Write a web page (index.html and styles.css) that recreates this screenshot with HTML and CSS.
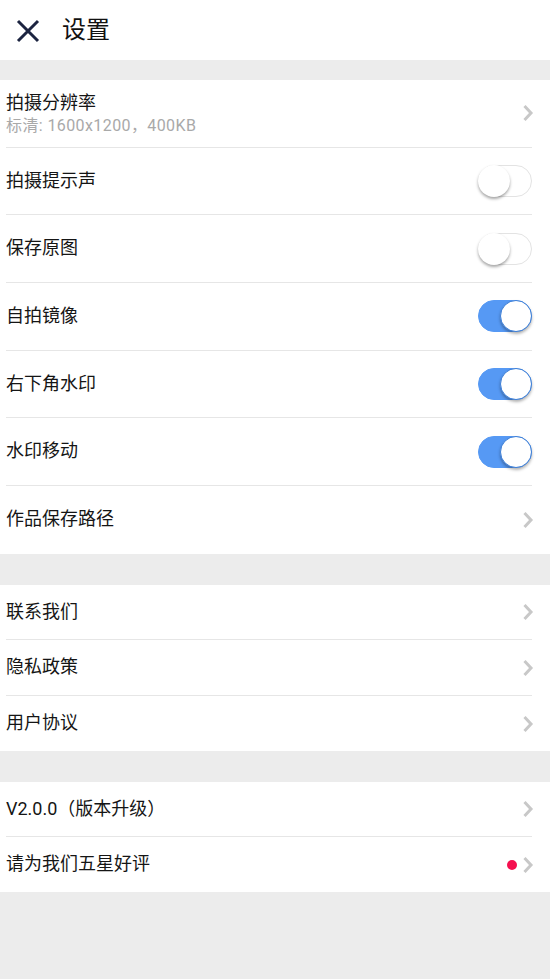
FILE: index.html
```html
<!DOCTYPE html>
<html lang="zh-CN">
<head>
<meta charset="utf-8">
<title>设置</title>
<link rel="stylesheet" href="styles.css">
</head>
<body>
<div class="page">
  <header class="header">
    <svg class="close" width="24" height="24" viewBox="0 0 24 24"><path d="M2 2 L22 22 M22 2 L2 22" stroke="#1c2440" stroke-width="3" stroke-linecap="butt" fill="none"/></svg>
    <h1 class="title">设置</h1>
  </header>

  <section class="group group-main">
    <div class="row tall">
      <div class="row-inner">
        <div class="label-wrap">
          <div class="label">拍摄分辨率</div>
          <div class="sub">标清: 1600x1200，400KB</div>
        </div>
        <svg class="chev" width="12" height="18" viewBox="0 0 12 18"><path d="M2.5 2 L9 9 L2.5 16" stroke="#c8c8c8" stroke-width="3" fill="none"/></svg>
      </div>
    </div>
    <div class="row tall"><div class="row-inner"><div class="label">拍摄提示声</div><span class="switch"><span class="knob"></span></span></div></div>
    <div class="row tall"><div class="row-inner"><div class="label">保存原图</div><span class="switch"><span class="knob"></span></span></div></div>
    <div class="row tall"><div class="row-inner"><div class="label">自拍镜像</div><span class="switch on"><span class="knob"></span></span></div></div>
    <div class="row tall"><div class="row-inner"><div class="label">右下角水印</div><span class="switch on"><span class="knob"></span></span></div></div>
    <div class="row tall"><div class="row-inner"><div class="label">水印移动</div><span class="switch on"><span class="knob"></span></span></div></div>
    <div class="row tall"><div class="row-inner last"><div class="label">作品保存路径</div><svg class="chev" width="12" height="18" viewBox="0 0 12 18"><path d="M2.5 2 L9 9 L2.5 16" stroke="#c8c8c8" stroke-width="3" fill="none"/></svg></div></div>
  </section>

  <section class="group">
    <div class="row mid"><div class="row-inner"><div class="label">联系我们</div><svg class="chev" width="12" height="18" viewBox="0 0 12 18"><path d="M2.5 2 L9 9 L2.5 16" stroke="#c8c8c8" stroke-width="3" fill="none"/></svg></div></div>
    <div class="row mid"><div class="row-inner"><div class="label">隐私政策</div><svg class="chev" width="12" height="18" viewBox="0 0 12 18"><path d="M2.5 2 L9 9 L2.5 16" stroke="#c8c8c8" stroke-width="3" fill="none"/></svg></div></div>
    <div class="row mid"><div class="row-inner last"><div class="label">用户协议</div><svg class="chev" width="12" height="18" viewBox="0 0 12 18"><path d="M2.5 2 L9 9 L2.5 16" stroke="#c8c8c8" stroke-width="3" fill="none"/></svg></div></div>
  </section>

  <section class="group">
    <div class="row short"><div class="row-inner"><div class="label">V2.0.0（版本升级）</div><svg class="chev" width="12" height="18" viewBox="0 0 12 18"><path d="M2.5 2 L9 9 L2.5 16" stroke="#c8c8c8" stroke-width="3" fill="none"/></svg></div></div>
    <div class="row short"><div class="row-inner last"><div class="label">请为我们五星好评</div><span class="right"><span class="dot"></span><svg class="chev" width="12" height="18" viewBox="0 0 12 18"><path d="M2.5 2 L9 9 L2.5 16" stroke="#c8c8c8" stroke-width="3" fill="none"/></svg></span></div></div>
  </section>
</div>
</body>
</html>
```

FILE: styles.css
```css
* { box-sizing: border-box; }
html, body {
  margin: 0;
  padding: 0;
  background: #ececec;
}
body {
  font-family: Roboto, "Noto Sans CJK SC", "Noto Sans", sans-serif;
  color: #1a1a1a;
  width: 550px;
  height: 979px;
  overflow: hidden;
}
.page {
  display: flex;
  flex-direction: column;
}
.header {
  height: 60px;
  background: #fff;
  display: flex;
  align-items: center;
  padding-left: 16px;
}
.close {
  display: block;
  margin-top: 2px;
}
.title {
  margin: 0 0 0 22px;
  font-size: 24px;
  font-weight: 400;
  line-height: 1;
  color: #111;
}
.group {
  background: #fff;
  margin-top: 31px;
}
.group-main {
  margin-top: 20px;
}
.row {
  padding-left: 6px;
  padding-right: 18px;
}
.row.tall { height: 67.7px; }
.row.mid { height: 55.5px; }
.row.short { height: 55px; }
.row-inner {
  height: 100%;
  display: flex;
  align-items: center;
  justify-content: space-between;
  border-bottom: 1px solid #e6e6e6;
}
.row-inner.last { border-bottom: none; }
.label {
  font-size: 18px;
  line-height: 24px;
  color: #151515;
  margin-top: -1px;
}
.label-wrap {
  display: flex;
  flex-direction: column;
}
.label-wrap .label { margin-top: 0; }
.sub {
  font-size: 16px;
  letter-spacing: 0.4px;
  line-height: 20px;
  color: #a9a9a9;
  margin-top: 1px;
}
.chev {
  display: block;
  margin-right: -2px;
}
.right {
  display: flex;
  align-items: center;
  gap: 5px;
}
.dot {
  width: 10px;
  height: 10px;
  border-radius: 50%;
  background: #f5104f;
}
.switch {
  position: relative;
  width: 54px;
  height: 32px;
  border-radius: 16px;
  background: #fff;
  border: 1px solid #e3e3e3;
  display: block;
}
.switch .knob {
  position: absolute;
  top: -1px;
  left: -1px;
  width: 32px;
  height: 32px;
  border-radius: 50%;
  background: #fff;
  box-shadow: 0 2px 3px rgba(0,0,0,0.35);
}
.switch.on {
  background: #5699f4;
  border-color: #5699f4;
}
.switch.on .knob {
  left: auto;
  right: -1px;
  box-shadow: 0 2px 3px rgba(0,0,0,0.3);
  border: 1px solid #3c7fd9;
}
```
